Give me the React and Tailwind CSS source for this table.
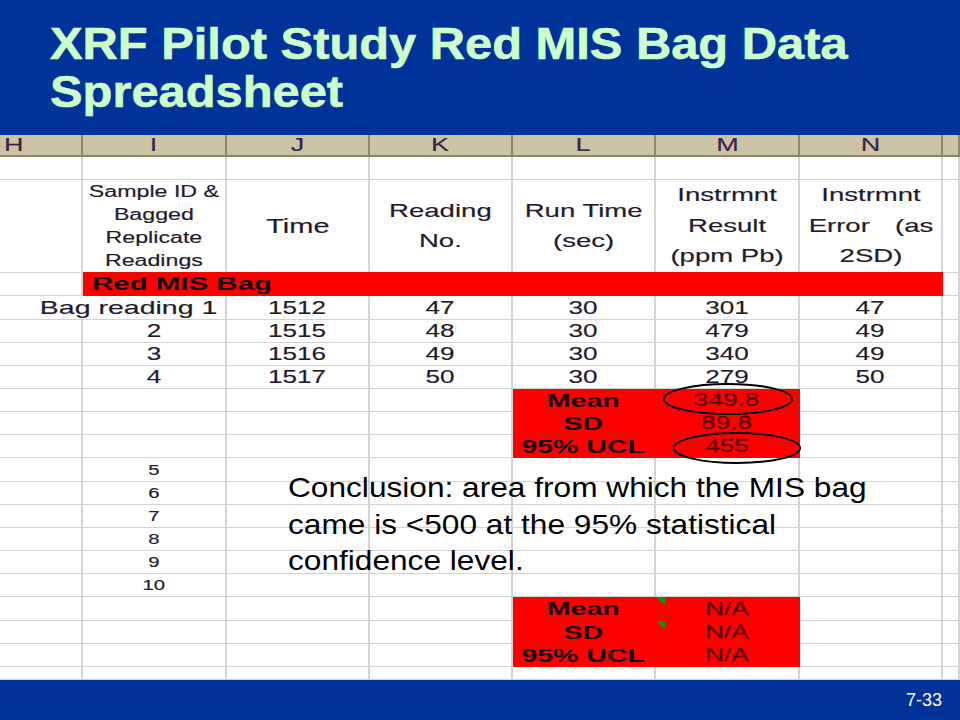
const COLS = "grid grid-cols-[83px_144px_143px_143px_143px_144px_143px_17px]";

function S({ children, className = "" }) {
  return (
    <span className={`inline-block whitespace-nowrap scale-x-[1.45] ${className}`}>
      {children}
    </span>
  );
}

function C({ children, red, noR, className = "" }) {
  const b = red ? "border-[#ff0000] bg-[#ff0000]" : "border-[#d3d3d3]";
  const r = noR ? "" : "border-r-2";
  return (
    <div className={`relative flex items-center justify-center border-b ${r} ${b} ${className}`}>
      {children}
    </div>
  );
}

function Num({ v }) {
  return <S className="text-[18px] leading-none">{v}</S>;
}

function Label({ v }) {
  return <span className="inline-block whitespace-nowrap scale-x-[1.5] text-[19px] font-bold leading-none text-[#140808] [-webkit-text-stroke:0px]">{v}</span>;
}

function Val({ v }) {
  return <S className="text-[18px] leading-none text-[#5c0000] [-webkit-text-stroke:0.3px_#5c0000]">{v}</S>;
}

const data = [
  ["Bag reading 1", "1512", "47", "30", "301", "47", "h-[24px]"],
  ["2", "1515", "48", "30", "479", "49", "h-[23px]"],
  ["3", "1516", "49", "30", "340", "49", "h-[23px]"],
  ["4", "1517", "50", "30", "279", "50", "h-[23px]"],
];

function StatRows({ rows }) {
  return rows.map(([label, val, h, tri], i) => (
    <div key={i} className={`${COLS} ${h}`}>
      <C />
      <C />
      <C />
      <C />
      <C red>
        <Label v={label} />
      </C>
      <C red>
        {tri && (
          <span className="absolute left-0 top-0 h-0 w-0 border-l-[9px] border-t-[8px] border-l-transparent border-t-[#1a8a1a]" />
        )}
        <Val v={val} />
      </C>
      <C />
      <C />
    </div>
  ));
}

function SmallRow({ n, h }) {
  return (
    <div className={`${COLS} ${h}`}>
      <C />
      <C>
        <S className="text-[14px] leading-none">{n}</S>
      </C>
      <C />
      <C />
      <C />
      <C />
      <C />
      <C />
    </div>
  );
}

export default function App() {
  return (
    <div className="flex h-[720px] w-[960px] flex-col overflow-hidden bg-white font-['Liberation_Sans',Arial,sans-serif]">
      {/* Title */}
      <div className="h-[135px] shrink-0 bg-[#003399] pl-[50px] pt-[20px]">
        <h1 className="origin-left scale-x-[1.085] text-[45px] font-bold leading-[48px] text-[#ccffcc] [-webkit-text-stroke:0.6px_#ccffcc]">
          XRF Pilot Study Red MIS Bag Data
          <br />
          Spreadsheet
        </h1>
      </div>

      {/* Sheet */}
      <div className="relative h-[545px] shrink-0 text-[#221a2c]">
        <div className="[-webkit-text-stroke:0.15px_currentColor]">
          {/* column letters */}
          <div className={`${COLS} h-[22px] bg-[#ccc3a4] text-[#3a2450]`}>
            {["H", "I", "J", "K", "L", "M", "N", ""].map((l, i) => (
              <div
                key={i}
                className={`flex items-center border-b-2 border-r-2 border-[#8d876a] ${i === 0 ? "justify-start pl-[4px]" : "justify-center"}`}
              >
                <span className={`inline-block scale-x-[1.5] text-[18px] leading-none ${i === 0 ? "origin-left" : ""}`}>{l}</span>
              </div>
            ))}
          </div>

          {/* empty row */}
          <div className={`${COLS} h-[23px]`}>
            {Array.from({ length: 8 }).map((_, i) => (
              <C key={i} />
            ))}
          </div>

          {/* header row */}
          <div className={`${COLS} h-[92px]`}>
            <C />
            <C>
              <div className="flex scale-x-[1.45] flex-col items-center text-[16px] leading-[23px]">
                <span>Sample ID &amp;</span>
                <span>Bagged</span>
                <span>Replicate</span>
                <span>Readings</span>
              </div>
            </C>
            <C>
              <S className="text-[20px] leading-none">Time</S>
            </C>
            <C>
              <div className="flex scale-x-[1.45] flex-col items-center text-[19px] leading-[30px]">
                <span>Reading</span>
                <span>No.</span>
              </div>
            </C>
            <C>
              <div className="flex scale-x-[1.45] flex-col items-center text-[19px] leading-[30px]">
                <span>Run Time</span>
                <span>(sec)</span>
              </div>
            </C>
            <C>
              <div className="flex scale-x-[1.45] flex-col items-center text-[19px] leading-[30.5px]">
                <span>Instrmnt</span>
                <span>Result</span>
                <span>(ppm Pb)</span>
              </div>
            </C>
            <C>
              <div className="flex scale-x-[1.45] flex-col items-center text-[19px] leading-[30.5px]">
                <span>Instrmnt</span>
                <span className="flex w-[86px] justify-between">
                  <span>Error</span>
                  <span>(as</span>
                </span>
                <span>2SD)</span>
              </div>
            </C>
            <C />
          </div>

          {/* Red MIS Bag row */}
          <div className={`${COLS} h-[24px]`}>
            <C />
            <C red className="col-span-6 justify-start pl-[9px]">
              <span className="inline-block origin-left scale-x-[1.55] whitespace-nowrap text-[19px] font-bold leading-none text-[#120a0a] [-webkit-text-stroke:0px]">
                Red MIS Bag
              </span>
            </C>
            <C />
          </div>

          {/* data rows */}
          {data.map((r, i) => (
            <div key={i} className={`${COLS} ${r[6]}`}>
              <C noR={i === 0} />
              <C className={i === 0 ? "justify-end pr-[8px]" : ""}>
                {i === 0 ? (
                  <span className="inline-block origin-right scale-x-[1.5] whitespace-nowrap text-[19px] leading-none">
                    {r[0]}
                  </span>
                ) : (
                  <Num v={r[0]} />
                )}
              </C>
              <C>
                <Num v={r[1]} />
              </C>
              <C>
                <Num v={r[2]} />
              </C>
              <C>
                <Num v={r[3]} />
              </C>
              <C>
                <Num v={r[4]} />
              </C>
              <C>
                <Num v={r[5]} />
              </C>
              <C />
            </div>
          ))}

          <StatRows
            rows={[
              ["Mean", "349.8", "h-[23px]"],
              ["SD", "89.8", "h-[23px]"],
              ["95% UCL", "455", "h-[23px]"],
            ]}
          />

          <SmallRow n="5" h="h-[24px]" />
          <SmallRow n="6" h="h-[23px]" />
          <SmallRow n="7" h="h-[23px]" />
          <SmallRow n="8" h="h-[23px]" />
          <SmallRow n="9" h="h-[23px]" />
          <SmallRow n="10" h="h-[23px]" />

          <StatRows
            rows={[
              ["Mean", "N/A", "h-[24px]", true],
              ["SD", "N/A", "h-[23px]", true],
              ["95% UCL", "N/A", "h-[23px]"],
            ]}
          />

          <div className={`${COLS} h-[13px]`}>
            {Array.from({ length: 8 }).map((_, i) => (
              <C key={i} />
            ))}
          </div>
        </div>

        {/* ellipses */}
        <svg className="pointer-events-none absolute left-0 top-0" width="960" height="545">
          <ellipse cx="728" cy="264" rx="64" ry="15" fill="none" stroke="#000" strokeWidth="2" />
          <ellipse cx="737" cy="313" rx="63" ry="15" fill="none" stroke="#000" strokeWidth="2" />
        </svg>

        {/* conclusion */}
        <div className="absolute left-[288px] top-[335px] origin-left scale-x-[1.13] whitespace-nowrap text-[28px] leading-[36.5px] text-black">
          Conclusion: area from which the MIS bag
          <br />
          came is &lt;500 at the 95% statistical
          <br />
          confidence level.
        </div>
      </div>

      {/* footer */}
      <div className="flex h-[40px] shrink-0 items-center justify-end bg-[#003399] pr-[18px]">
        <span className="text-[18px] leading-none text-white">7-33</span>
      </div>
    </div>
  );
}
